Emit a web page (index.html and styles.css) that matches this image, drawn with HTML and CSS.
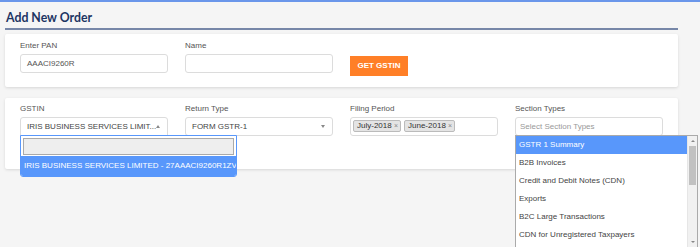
FILE: index.html
```html
<!DOCTYPE html>
<html lang="en">
<head>
  <meta charset="UTF-8" />
  <title>Add New Order</title>
  <link rel="stylesheet" href="styles.css">
</head>
<body>
  <div class="page">
    <h1 class="title">Add New Order</h1>

    <div class="card card-pan">
      <div class="row">
        <div class="field">
          <label>Enter PAN</label>
          <div class="input">AAACI9260R</div>
        </div>
        <div class="field">
          <label>Name</label>
          <div class="input"></div>
        </div>
        <div class="field field-btn">
          <button class="btn-orange">GET GSTIN</button>
        </div>
      </div>
    </div>

    <div class="card card-filter">
      <div class="row">
        <div class="field">
          <label>GSTIN</label>
          <div class="input select open">
            <span class="sel-text">IRIS BUSINESS SERVICES LIMIT...</span>
            <span class="arrow up"></span>
          </div>
          <div class="drop drop-gstin">
            <div class="search"></div>
            <div class="opt active">IRIS BUSINESS SERVICES LIMITED - 27AAACI9260R1ZV</div>
          </div>
        </div>
        <div class="field">
          <label>Return Type</label>
          <div class="input select">
            <span class="sel-text">FORM GSTR-1</span>
            <span class="arrow down"></span>
          </div>
        </div>
        <div class="field">
          <label>Filing Period</label>
          <div class="input tags">
            <span class="tag">July-2018 <i>&times;</i></span>
            <span class="tag">June-2018 <i>&times;</i></span>
          </div>
        </div>
        <div class="field">
          <label>Section Types</label>
          <div class="input placeholder">Select Section Types</div>
          <div class="drop drop-section">
            <ul class="opts">
              <li class="active">GSTR 1 Summary</li>
              <li>B2B Invoices</li>
              <li>Credit and Debit Notes (CDN)</li>
              <li>Exports</li>
              <li>B2C Large Transactions</li>
              <li>CDN for Unregistered Taxpayers</li>
            </ul>
            <div class="scrollbar">
              <span class="sb-arrow sb-up"></span>
              <span class="sb-thumb"></span>
              <span class="sb-arrow sb-down"></span>
            </div>
          </div>
        </div>
      </div>
    </div>
  </div>
</body>
</html>
```

FILE: styles.css
```css
body {
  margin: 0;
  background: #f5f5f5;
  border-top: 2px solid #6a96ea;
  font-family: "Liberation Sans", Arial, sans-serif;
  color: #555;
  height: 245px;
  overflow: hidden;
}
.page {
  padding: 0 22px 0 5px;
}
.title {
  font-family: Lato, "Liberation Sans", sans-serif;
  font-weight: 700;
  font-size: 12.3px;
  color: #1d3563;
  margin: 0;
  padding: 10px 0 4px 1px;
  line-height: 12px;
  border-bottom: 2px solid #7787a8;
}
.card {
  background: #fff;
  box-shadow: 0 1px 3px rgba(0,0,0,0.12);
  border-radius: 2px;
  padding: 7px 15px 11px;
  margin-top: 4px;
}
.card-filter {
  margin-top: 11px;
  padding-top: 6px;
  padding-bottom: 33px;
}
.row {
  display: grid;
  grid-template-columns: repeat(4, 148px);
  column-gap: 17px;
}
.field {
  position: relative;
}
.field label {
  display: block;
  font-size: 8px;
  line-height: 10px;
  color: #555;
  margin-bottom: 3px;
}
.field-btn {
  padding-top: 13px;
}
.input {
  box-sizing: border-box;
  height: 19px;
  border: 1px solid #dcdcdc;
  border-radius: 3px;
  font-size: 8px;
  line-height: 17px;
  padding: 0 6px;
  color: #555;
  background: #fff;
  white-space: nowrap;
}
.select {
  display: flex;
  justify-content: space-between;
  align-items: center;
  padding-right: 7px;
  color: #444;
}
.select.open {
  border-bottom-left-radius: 0;
  border-bottom-right-radius: 0;
}
.arrow {
  width: 0;
  height: 0;
  border-left: 2px solid transparent;
  border-right: 2px solid transparent;
}
.arrow.up {
  border-bottom: 3px solid #888;
}
.arrow.down {
  border-top: 3px solid #888;
}
.placeholder {
  color: #999;
  padding-left: 4px;
}
.tags {
  display: flex;
  align-items: center;
  gap: 3px;
  padding-left: 2px;
}
.tag {
  background: #e4e4e4;
  border: 1px solid #bbb;
  border-radius: 2px;
  font-size: 8px;
  line-height: 10px;
  color: #333;
  padding: 0 2px 0 3px;
}
.tag i {
  font-style: normal;
  font-size: 7px;
  color: #888;
}
.btn-orange {
  background: #ff7f27;
  border: none;
  color: #fff;
  font-family: "Liberation Sans", Arial, sans-serif;
  font-size: 8px;
  font-weight: 700;
  height: 20px;
  width: 58px;
  padding: 0;
  cursor: pointer;
}
.drop {
  position: absolute;
  background: #fff;
  border: 1px solid #aaa;
  z-index: 2;
  white-space: nowrap;
}
.drop-gstin {
  top: 31px;
  left: 0;
  width: 217px;
  box-sizing: border-box;
  border-color: #5897fb;
  border-radius: 0 0 3px 3px;
  overflow: hidden;
}
.search {
  height: 15px;
  margin: 2px 2px 1px;
  border: 1px solid #aaa;
  background: #eee;
}
.opt {
  font-size: 8px;
  line-height: 20px;
  padding: 0 3px;
  color: #444;
}
.opt.active {
  background: #5897fb;
  color: #fff;
}
.drop-section {
  top: 31px;
  left: 0;
  width: 183px;
  height: 113px;
  box-sizing: border-box;
  display: flex;
  overflow: hidden;
}
.opts {
  list-style: none;
  margin: 0;
  padding: 0;
  flex: 1;
}
.opts li {
  font-size: 8px;
  line-height: 18px;
  height: 18px;
  padding: 0 3px;
  color: #444;
}
.opts li.active {
  background: #5897fb;
  color: #fff;
}
.scrollbar {
  width: 9px;
  background: #f1f1f1;
  display: flex;
  flex-direction: column;
  align-items: center;
  border-left: 1px solid #e6e6e6;
}
.sb-arrow {
  width: 0;
  height: 0;
  border-left: 2px solid transparent;
  border-right: 2px solid transparent;
  margin: 4px 0;
}
.sb-up {
  border-bottom: 2px solid #888;
}
.sb-down {
  border-top: 2px solid #888;
  margin-top: auto;
}
.sb-thumb {
  width: 7px;
  height: 39px;
  background: #c1c1c1;
}
```
